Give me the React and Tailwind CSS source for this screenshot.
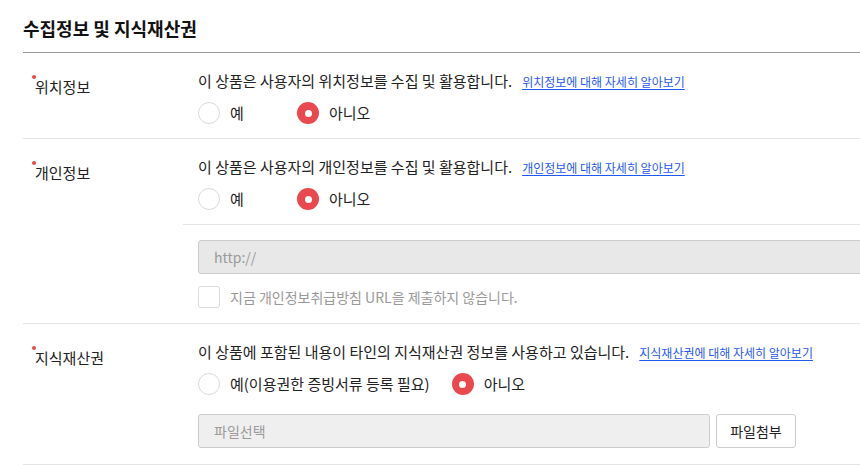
import React, { useState } from "react";

const Radio = ({ checked, label, onClick, className = "" }) => (
  <label onClick={onClick} className={`flex items-center gap-[10px] cursor-pointer ${className}`}>
    {checked ? (
      <span className="w-[22px] h-[22px] rounded-full bg-[#e9494e] flex items-center justify-center">
        <span className="w-[7px] h-[7px] rounded-full bg-white" />
      </span>
    ) : (
      <span className="w-[22px] h-[22px] rounded-full border border-[#dadada] bg-white" />
    )}
    <span className="text-[15px] leading-[20px] text-[#222]">{label}</span>
  </label>
);

const RadioGroup = ({ yesLabel = "예", value, onChange, gap = "gap-[34px]" }) => (
  <div className={`flex items-center h-[22px] mt-[11px] ${gap}`}>
    <Radio
      checked={value === "yes"}
      label={yesLabel}
      onClick={() => onChange("yes")}
      className="min-w-[65px]"
    />
    <Radio checked={value === "no"} label="아니오" onClick={() => onChange("no")} />
  </div>
);

const Label = ({ children }) => (
  <div className="w-[160px] shrink-0 pt-[21px] pl-[12px]">
    <span className="relative text-[15px] leading-[20px] text-[#222]">
      <span className="absolute -left-[3px] -top-[1px] w-[4px] h-[4px] rounded-full bg-[#e9494e]" />
      {children}
    </span>
  </div>
);

const Desc = ({ text, link }) => (
  <div className="flex items-baseline h-[20px]">
    <span className="text-[15px] leading-[20px] text-[#222]">{text}</span>
    <a href="#" className="ml-[10px] text-[12px] leading-[20px] text-[#1f5af0] underline underline-offset-2">
      {link}
    </a>
  </div>
);

export default function App() {
  const [loc, setLoc] = useState("no");
  const [priv, setPriv] = useState("no");
  const [ip, setIp] = useState("no");
  const [noUrl, setNoUrl] = useState(false);

  return (
    <div
      className="w-[860px] h-[465px] overflow-hidden bg-white"
      style={{ fontFamily: '"Noto Sans CJK KR", "Noto Sans", sans-serif' }}
    >
      <div className="w-[920px] pl-[23px]">
        <h2 className="h-[53px] pt-[16px] text-[18px] leading-[24px] font-bold text-[#111] border-b border-[#999]">
          수집정보 및 지식재산권
        </h2>

        <div className="flex border-b border-[#e3e3e3]">
          <Label>위치정보</Label>
          <div className="flex-1 pl-[15px] pt-[18px] pb-[14px]">
            <Desc
              text="이 상품은 사용자의 위치정보를 수집 및 활용합니다."
              link="위치정보에 대해 자세히 알아보기"
            />
            <RadioGroup value={loc} onChange={setLoc} />
          </div>
        </div>

        <div className="flex border-b border-[#e3e3e3]">
          <Label>개인정보</Label>
          <div className="flex-1">
            <div className="pl-[15px] pt-[18px] pb-[14px] border-b border-[#e3e3e3]">
              <Desc
                text="이 상품은 사용자의 개인정보를 수집 및 활용합니다."
                link="개인정보에 대해 자세히 알아보기"
              />
              <RadioGroup value={priv} onChange={setPriv} />
            </div>
            <div className="pl-[15px] pt-[15px] pb-[15px]">
              <input
                disabled
                placeholder="http://"
                className="block w-full h-[34px] px-[15px] bg-[#e8e8e8] border border-[#cccccc] rounded-[3px] text-[14px] placeholder:text-[#9a9a9a] outline-none"
              />
              <label
                onClick={() => setNoUrl(!noUrl)}
                className="flex items-center gap-[10px] mt-[12px] h-[22px] cursor-pointer"
              >
                <span className="w-[22px] h-[22px] rounded-[3px] border border-[#dcdcdc] bg-white flex items-center justify-center text-[#e9494e] text-[13px]">
                  {noUrl ? "✓" : ""}
                </span>
                <span className="text-[14px] leading-[20px] text-[#999]">
                  지금 개인정보취급방침 URL을 제출하지 않습니다.
                </span>
              </label>
            </div>
          </div>
        </div>

        <div className="flex border-b border-[#e3e3e3]">
          <Label>지식재산권</Label>
          <div className="flex-1 pl-[15px] pt-[18px] pb-[16px]">
            <Desc
              text="이 상품에 포함된 내용이 타인의 지식재산권 정보를 사용하고 있습니다."
              link="지식재산권에 대해 자세히 알아보기"
            />
            <RadioGroup
              yesLabel="예(이용권한 증빙서류 등록 필요)"
              value={ip}
              onChange={setIp}
              gap="gap-[22px]"
            />
            <div className="flex items-center gap-[6px] mt-[19px]">
              <div className="w-[512px] h-[34px] px-[15px] flex items-center bg-[#efefef] border border-[#cccccc] rounded-[3px] text-[14px] text-[#9a9a9a]">
                파일선택
              </div>
              <button className="w-[80px] h-[34px] bg-white border border-[#cccccc] rounded-[3px] text-[14px] text-[#222]">
                파일첨부
              </button>
            </div>
          </div>
        </div>
      </div>
    </div>
  );
}
